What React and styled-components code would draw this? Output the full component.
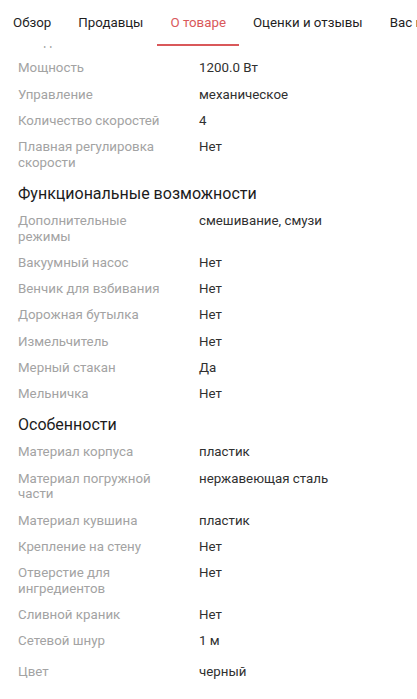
import styled, { createGlobalStyle } from "styled-components";

const GlobalStyle = createGlobalStyle`
  html, body {
    margin: 0;
    padding: 0;
    background: #fff;
  }
  body {
    font-family: Roboto, "Noto Sans", "Liberation Sans", sans-serif;
    -webkit-font-smoothing: antialiased;
  }
`;

const Page = styled.div`
  width: 417px;
  height: 699px;
  overflow: hidden;
  background: #fff;
`;

const TabBar = styled.nav`
  display: flex;
  height: 46px;
  overflow: hidden;
  white-space: nowrap;
  background: #fff;
`;

const Tab = styled.div`
  display: flex;
  align-items: center;
  padding: 0 13px;
  margin-right: 1px;
  font-size: 13.3px;
  color: ${(p) => (p.$active ? "#d9585a" : "#1f1f1f")};
  border-bottom: 2px solid ${(p) => (p.$active ? "#d9585a" : "transparent")};
  box-sizing: border-box;
  flex-shrink: 0;
`;

const Content = styled.div`
  display: flex;
  flex-direction: column;
  padding: 0 18px;
`;

const Peek = styled.div`
  height: 9px;
  overflow: hidden;
  display: flex;
  flex-direction: column;
  justify-content: flex-end;
`;

const Row = styled.div`
  display: grid;
  grid-template-columns: 181px 1fr;
  padding: 5.4px 0;
  margin-top: ${(p) => (p.$gap ? "5px" : "0")};
  font-size: 13.3px;
  line-height: 15.5px;
`;

const Label = styled.div`
  color: #a3a3a3;
  padding-right: 28px;
`;

const Value = styled.div`
  color: #303030;
`;

const Heading = styled.h3`
  margin: 0;
  padding: 7px 0 3px;
  font-size: 16px;
  font-weight: 400;
  line-height: 22px;
  color: #1c1c1c;
`;

const tabs = ["Обзор", "Продавцы", "О товаре", "Оценки и отзывы", "Вас может заинтересовать"];

const sections = [
  {
    rows: [
      ["Мощность", "1200.0 Вт"],
      ["Управление", "механическое"],
      ["Количество скоростей", "4"],
      ["Плавная регулировка скорости", "Нет"],
    ],
  },
  {
    title: "Функциональные возможности",
    rows: [
      ["Дополнительные режимы", "смешивание, смузи"],
      ["Вакуумный насос", "Нет"],
      ["Венчик для взбивания", "Нет"],
      ["Дорожная бутылка", "Нет"],
      ["Измельчитель", "Нет"],
      ["Мерный стакан", "Да"],
      ["Мельничка", "Нет"],
    ],
  },
  {
    title: "Особенности",
    rows: [
      ["Материал корпуса", "пластик"],
      ["Материал погружной части", "нержавеющая сталь"],
      ["Материал кувшина", "пластик"],
      ["Крепление на стену", "Нет"],
      ["Отверстие для ингредиентов", "Нет"],
      ["Сливной краник", "Нет"],
      ["Сетевой шнур", "1 м"],
      ["Цвет", "черный", true],
    ],
  },
];

export default function App() {
  return (
    <Page>
      <GlobalStyle />
      <TabBar>
        {tabs.map((t) => (
          <Tab key={t} $active={t === "О товаре"}>
            {t}
          </Tab>
        ))}
      </TabBar>
      <Content>
        {/* row scrolled mostly under the tab bar */}
        <Peek>
          <Row>
            <Label>Тип двигателя</Label>
            <Value>есть</Value>
          </Row>
        </Peek>
        {sections.map((s, i) => (
          <div key={i}>
            {s.title && <Heading>{s.title}</Heading>}
            {s.rows.map(([label, value, gap]) => (
              <Row key={label} $gap={gap}>
                <Label>{label}</Label>
                <Value>{value}</Value>
              </Row>
            ))}
          </div>
        ))}
      </Content>
    </Page>
  );
}
